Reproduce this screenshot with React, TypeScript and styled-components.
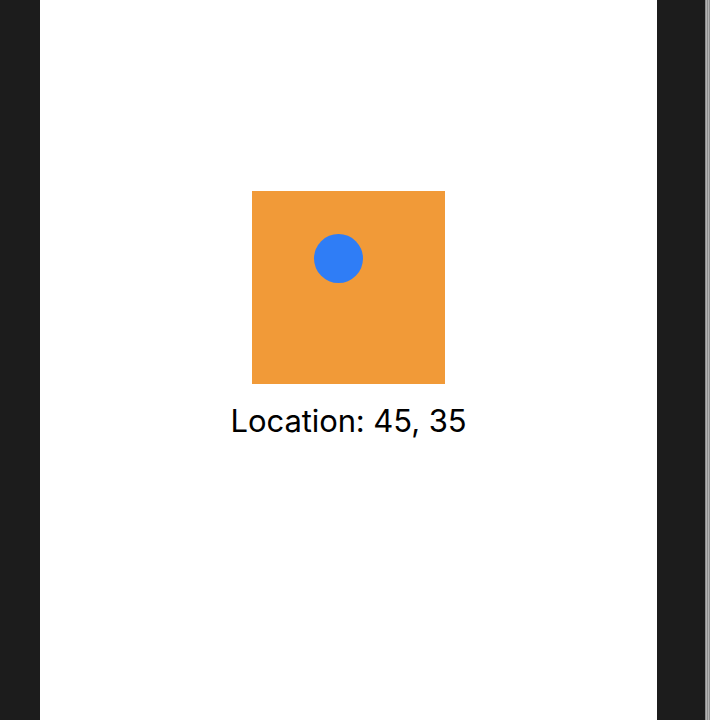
import styled, { createGlobalStyle } from 'styled-components';

const GlobalStyle = createGlobalStyle`
  html, body {
    margin: 0;
    padding: 0;
    background: #1c1c1c;
  }
  body {
    font-family: Inter, 'Noto Sans', sans-serif;
  }
`;

const Screen = styled.div`
  display: grid;
  grid-template-columns: 40px 617px 1fr 5px;
  height: 720px;
  width: 710px;
  overflow: hidden;
`;

const Side = styled.div`
  background: #1c1c1c;
`;

const Scrollbar = styled.div`
  background: repeating-linear-gradient(90deg, #8e8e8e 0 1px, #b4b4b4 1px 2px);
`;

const Panel = styled.main`
  background: #ffffff;
  display: flex;
  flex-direction: column;
  align-items: center;
  padding-top: 191px;
`;

const Pad = styled.div`
  position: relative;
  width: 193px;
  height: 193px;
  background: #f19a38;
`;

const Dot = styled.div`
  position: absolute;
  width: 49px;
  height: 49px;
  border-radius: 50%;
  background: #2f7df6;
`;

const Label = styled.div`
  margin-top: 17px;
  font-size: 31px;
  line-height: 40px;
  color: #000;
  letter-spacing: -0.1px;
`;

export default function App() {
  const location = { x: 45, y: 35 };

  return (
    <>
      <GlobalStyle />
      <Screen>
        <Side />
        <Panel>
          <Pad>
            <Dot style={{ left: 62, top: 43 }} />
          </Pad>
          <Label>
            Location: {location.x}, {location.y}
          </Label>
        </Panel>
        <Side />
        <Scrollbar />
      </Screen>
    </>
  );
}
